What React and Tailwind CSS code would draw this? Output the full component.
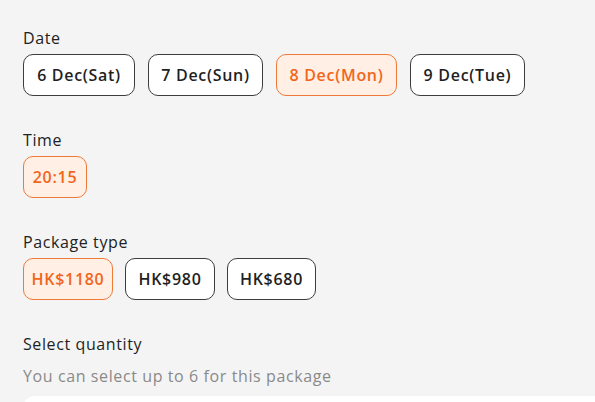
const dates = [
  { label: '6 Dec(Sat)', w: 'w-[112px]' },
  { label: '7 Dec(Sun)', w: 'w-[115px]' },
  { label: '8 Dec(Mon)', w: 'w-[121px]', active: true },
  { label: '9 Dec(Tue)', w: 'w-[115px]' },
]

const packages = [
  { label: 'HK$1180', w: 'w-[90px]', active: true },
  { label: 'HK$980', w: 'w-[90px]' },
  { label: 'HK$680', w: 'w-[89px]' },
]

function Chip({ label, w, active }) {
  return (
    <button
      type="button"
      className={
        active
          ? `${w} h-[42px] flex items-center justify-center rounded-[10px] border border-[#ef7a38] bg-[#ffefe4] text-[#f1661b] text-[16px] font-semibold tracking-[0.7px]`
          : `${w} h-[42px] flex items-center justify-center rounded-[10px] border border-[#3d3d3d] bg-white text-[#1f1f1f] text-[16px] font-semibold tracking-[0.7px]`
      }
    >
      {label}
    </button>
  )
}

function Section({ title, gap, children }) {
  return (
    <div className="mb-8">
      <div className="text-[16px] leading-6 text-[#222] tracking-[0.6px]">{title}</div>
      <div className={`mt-1 flex items-center ${gap}`}>{children}</div>
    </div>
  )
}

export default function App() {
  return (
    <div
      className="w-[595px] h-[402px] overflow-hidden bg-[#f4f4f4] pl-[23px] pt-[26px]"
      style={{ fontFamily: '"Open Sans", "Liberation Sans", sans-serif' }}
    >
      <Section title="Date" gap="gap-[13px]">
        {dates.map((d) => (
          <Chip key={d.label} {...d} />
        ))}
      </Section>

      <Section title="Time" gap="gap-[13px]">
        <Chip label="20:15" w="w-[64px]" active />
      </Section>

      <Section title="Package type" gap="gap-[12px]">
        {packages.map((p) => (
          <Chip key={p.label} {...p} />
        ))}
      </Section>

      <div>
        <div className="text-[16px] leading-6 text-[#1f1f1f] font-medium tracking-[0.6px]">Select quantity</div>
        <div className="mt-2 text-[16px] leading-6 text-[#8a8a8a] tracking-[0.6px]">You can select up to 6 for this package</div>
        <div className="mt-2 h-16 bg-white rounded-tl-xl" />
      </div>
    </div>
  )
}
